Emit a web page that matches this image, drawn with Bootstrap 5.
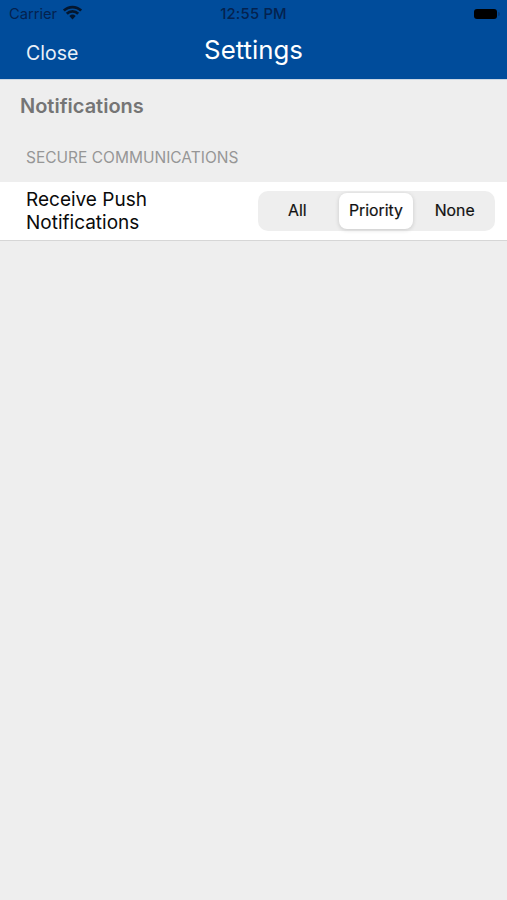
<!DOCTYPE html>
<html lang="en">
<head>
<meta charset="utf-8">
<title>Settings</title>
<link href="https://cdn.jsdelivr.net/npm/bootstrap@5.3.0/dist/css/bootstrap.min.css" rel="stylesheet">
<style>
html,body{height:100%}
body{background:#eeeeee;font-family:Inter,"Liberation Sans",sans-serif;overflow:hidden}
.app-header{background:#004c9b;height:79px;box-shadow:0 1px 0 #c9d6e4}
.status-row{height:28px;color:#04224f;font-size:14.7px;padding:0 10px 0 9px}
.status-side{flex:1 1 0}
.status-time{font-size:14.8px;font-weight:500;letter-spacing:.2px;padding-left:1px}
.batt{width:23px;height:10px;background:#000;border-radius:3px;position:relative;margin-right:0}
.batt::after{content:"";position:absolute;right:-3px;top:3px;width:2px;height:4px;background:#0a3a75;border-radius:0 2px 2px 0}
.wifi-icon{margin-left:-2px;margin-top:-2px}
.title-row{height:51px;color:#fff}
.close-link{left:26px;top:13px;font-size:19.5px;position:absolute;color:#e9f0f8;line-height:24px}
.title-text{font-size:25.8px;line-height:30px;margin-top:7px}
.page-title{font-size:20px;font-weight:600;color:#757575;padding:15px 20px 0;line-height:24px}
.section-label{font-size:15.5px;color:#969696;padding:31px 26px 0;line-height:18px;height:64px}
.setting-row{background:#fff;height:59px;border-bottom:1px solid #d6d6d6;padding:0 12px 0 26px}
.setting-name{font-size:19px;line-height:23px;color:#0a0a0a;width:200px;font-weight:400}
.segments{background:#eeeeee;border-radius:10px;width:237px;height:40px;padding:2px 1px 2px 0;margin-top:-1px}
.seg-item{flex:1 1 0;text-align:center;font-size:15.8px;font-weight:400;color:#111;line-height:35px;border-radius:8px;margin:0 2.5px;-webkit-text-stroke:.2px #111}
.seg-on{background:#fff;box-shadow:0 1px 4px rgba(0,0,0,.16)}
</style>
</head>
<body>
<header class="app-header">
  <div class="status-row d-flex align-items-center">
    <div class="status-side d-flex align-items-center gap-2">
      <span>Carrier</span>
      <svg class="wifi-icon" width="19" height="15" viewBox="0 0 18 14" aria-hidden="true"><path d="M.8 5.2a11.8 11.8 0 0 1 16.4 0M3.6 8.1a7.7 7.7 0 0 1 10.8 0" fill="none" stroke="#04172f" stroke-width="2.6"/><path d="M6 10.4a4.4 4.4 0 0 1 6 0L9 13.6z" fill="#04172f"/></svg>
    </div>
    <div class="status-time">12:55 PM</div>
    <div class="status-side d-flex justify-content-end"><div class="batt"></div></div>
  </div>
  <div class="title-row position-relative d-flex justify-content-center">
    <span class="close-link">Close</span>
    <div class="title-text">Settings</div>
  </div>
</header>
<main>
  <div class="page-title">Notifications</div>
  <div class="section-label">SECURE COMMUNICATIONS</div>
  <div class="setting-row d-flex align-items-center justify-content-between">
    <div class="setting-name">Receive Push Notifications</div>
    <div class="segments d-flex">
      <div class="seg-item">All</div>
      <div class="seg-item seg-on">Priority</div>
      <div class="seg-item">None</div>
    </div>
  </div>
</main>
<script src="https://cdn.jsdelivr.net/npm/bootstrap@5.3.0/dist/js/bootstrap.bundle.min.js"></script>
</body>
</html>
